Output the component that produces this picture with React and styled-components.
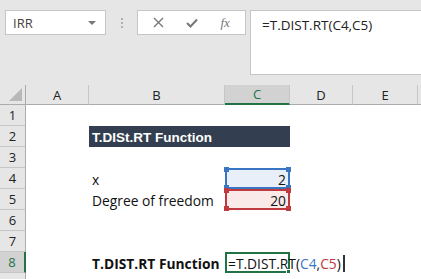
import React from 'react';
import styled, { createGlobalStyle, css } from 'styled-components';

const GlobalStyle = createGlobalStyle`
  html, body {
    margin: 0;
    padding: 0;
    background: #ffffff;
    overflow: hidden;
  }
  * { box-sizing: border-box; }
`;

const Window = styled.div`
  width: 421px;
  height: 279px;
  overflow: hidden;
  background: #ffffff;
  font-family: "Open Sans", "Liberation Sans", sans-serif;
`;

const Toolbar = styled.div`
  display: flex;
  align-items: flex-start;
  height: 85px;
  padding: 10px 0 0 5px;
  background: #e6e6e6;
`;

const NameBox = styled.div`
  width: 101px;
  height: 25px;
  background: #fff;
  border: 1px solid #c6c6c6;
  display: flex;
  align-items: center;
  justify-content: space-between;
  padding: 0 9px 0 7px;
  font-size: 13px;
  color: #444;
`;

const Caret = styled.span`
  width: 0;
  height: 0;
  border-left: 4px solid transparent;
  border-right: 4px solid transparent;
  border-top: 4px solid #777;
`;

const Grip = styled.div`
  width: 31px;
  height: 25px;
  display: flex;
  flex-direction: column;
  align-items: center;
  justify-content: center;
  gap: 2px;
  span {
    width: 2px;
    height: 2px;
    background: #b0b0b0;
  }
`;

const Buttons = styled.div`
  width: 109px;
  height: 25px;
  background: #fff;
  border: 1px solid #c6c6c6;
  display: flex;
  align-items: center;
  justify-content: space-around;
  padding: 0 4px;
  color: #777;
`;

const Fx = styled.span`
  font-family: "Liberation Serif", serif;
  font-style: italic;
  font-size: 13px;
  color: #777;
`;

const FormulaBar = styled.div`
  flex: 1;
  height: 65px;
  margin-left: 4px;
  background: #fff;
  border: 1px solid #c6c6c6;
  border-right: none;
  padding: 5px 0 0 11px;
  font-size: 13.5px;
  color: #222;
`;

const Sheet = styled.div`
  display: grid;
  grid-template-columns: 26px 63px 136px 65px 63px 65px 1fr;
  grid-template-rows: 20px;
  grid-auto-rows: 21px;
  background: #fff;
`;

const Corner = styled.div`
  background: #e6e6e6;
  border-right: 1px solid #ababab;
  border-bottom: 1px solid #ababab;
  position: relative;
  &::after {
    content: '';
    position: absolute;
    right: 3px;
    bottom: 3px;
    border-left: 13px solid transparent;
    border-bottom: 13px solid #b8b8b8;
  }
`;

const ColHead = styled.div`
  background: ${p => (p.$active ? '#d2d2d2' : '#e6e6e6')};
  border-right: 1px solid #c6c6c6;
  border-bottom: ${p => (p.$active ? '2px solid #217346' : '1px solid #ababab')};
  display: flex;
  align-items: center;
  justify-content: center;
  font-size: 13px;
  color: ${p => (p.$active ? '#217346' : '#222')};
`;

const RowHead = styled.div`
  background: ${p => (p.$active ? '#d2d2d2' : '#e6e6e6')};
  border-right: ${p => (p.$active ? '2px solid #217346' : '1px solid #ababab')};
  border-bottom: 1px solid #c6c6c6;
  display: flex;
  align-items: center;
  justify-content: center;
  font-size: 13px;
  color: ${p => (p.$active ? '#217346' : '#222')};
`;

const Cell = styled.div`
  position: relative;
  display: flex;
  align-items: center;
  white-space: nowrap;
  padding: 1px 3px 0;
  font-family: "Open Sans", "Liberation Sans", sans-serif;
  font-size: 13.8px;
  color: #111;
  font-weight: ${p => (p.$bold ? 700 : 400)};
  justify-content: ${p => (p.$right ? 'flex-end' : 'flex-start')};
  grid-column: ${p => p.$span || 'auto'};
`;

const TitleCell = styled(Cell)`
  background: #333f50;
  color: #fff;
  font-family: "Liberation Sans", Arial, sans-serif;
  font-weight: 700;
  font-size: 13.5px;
`;

const RefCell = styled(Cell)`
  ${p => css`
    background: ${p.$fill};
    border: 2px solid ${p.$color};
  `}
  padding-right: 2px;
`;

const Handle = styled.span`
  position: absolute;
  width: 5px;
  height: 5px;
  background: ${p => p.$color};
  ${p => (p.$top ? 'top: -3px;' : 'bottom: -3px;')}
  ${p => (p.$left ? 'left: -3px;' : 'right: -3px;')}
`;

const EditCell = styled(Cell)`
  border: 2px solid #217346;
  overflow: visible;
  padding-left: 1px;
  z-index: 1;
`;

const FillHandle = styled.span`
  position: absolute;
  right: -3px;
  bottom: -3px;
  width: 5px;
  height: 5px;
  background: #217346;
  border: 1px solid #fff;
`;

const Ref = styled.span`
  color: ${p => p.$color};
`;

const TextCaret = styled.span`
  display: inline-block;
  flex: none;
  width: 2px;
  height: 17px;
  margin-left: 2px;
  background: #333;
`;

const cols = ['A', 'B', 'C', 'D', 'E', ''];

const Handles = ({ color }) => (
  <>
    <Handle $color={color} $top $left />
    <Handle $color={color} $top />
    <Handle $color={color} $left />
    <Handle $color={color} />
  </>
);

const Empty = ({ n }) => Array.from({ length: n }, (_, i) => <Cell key={i} />);

const App = () => {
  return (
    <Window>
      <GlobalStyle />
      <Toolbar>
        <NameBox>
          <span>IRR</span>
          <Caret />
        </NameBox>
        <Grip>
          <span />
          <span />
          <span />
        </Grip>
        <Buttons>
          <svg width="11" height="11" viewBox="0 0 11 11">
            <path d="M1 1 L10 10 M10 1 L1 10" stroke="#777" strokeWidth="1.4" />
          </svg>
          <svg width="12" height="10" viewBox="0 0 12 10">
            <path d="M1 5 L4.5 8.5 L11 1.5" stroke="#777" strokeWidth="2" fill="none" />
          </svg>
          <Fx>fx</Fx>
        </Buttons>
        <FormulaBar>=T.DIST.RT(C4,C5)</FormulaBar>
      </Toolbar>

      <Sheet>
        <Corner />
        {cols.map((c, i) => (
          <ColHead key={i} $active={c === 'C'}>{c}</ColHead>
        ))}

        <RowHead>1</RowHead>
        <Empty n={6} />

        <RowHead>2</RowHead>
        <Cell />
        <TitleCell $span="span 2">T.DISt.RT Function</TitleCell>
        <Empty n={3} />

        <RowHead>3</RowHead>
        <Empty n={6} />

        <RowHead>4</RowHead>
        <Cell />
        <Cell>x</Cell>
        <RefCell $right $color="#3a75c4" $fill="#e8eff9">
          2
          <Handles color="#3a75c4" />
        </RefCell>
        <Empty n={3} />

        <RowHead>5</RowHead>
        <Cell />
        <Cell>Degree of freedom</Cell>
        <RefCell $right $color="#c0393f" $fill="#f9e9e9">
          20
          <Handles color="#c0393f" />
        </RefCell>
        <Empty n={3} />

        <RowHead>6</RowHead>
        <Empty n={6} />

        <RowHead>7</RowHead>
        <Empty n={6} />

        <RowHead $active>8</RowHead>
        <Cell />
        <Cell $bold>T.DIST.RT Function</Cell>
        <EditCell>
          <span>
            =T.DIST.RT(<Ref $color="#3a75c4">C4</Ref>,<Ref $color="#c0393f">C5</Ref>)
          </span>
          <TextCaret />
          <FillHandle />
        </EditCell>
        <Empty n={3} />

        <RowHead />
        <Empty n={6} />
      </Sheet>
    </Window>
  );
};

export default App;
